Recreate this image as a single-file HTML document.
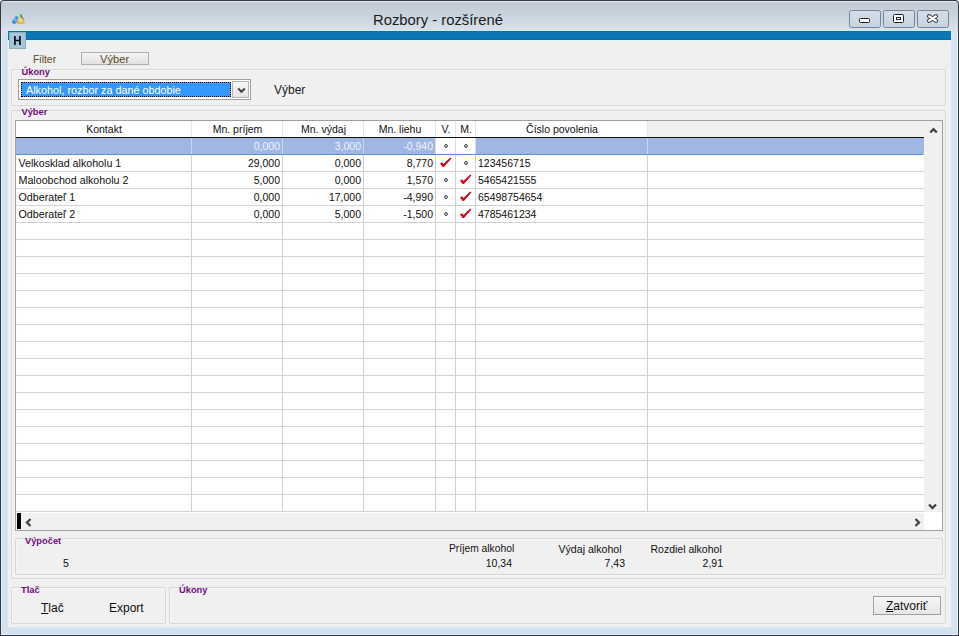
<!DOCTYPE html><html><head><meta charset="utf-8"><style>
*{margin:0;padding:0;box-sizing:border-box}
html,body{width:959px;height:636px;overflow:hidden;background:#fff}
body{position:relative;font-family:"Liberation Sans",sans-serif;color:#000}
.a{position:absolute}
.t{position:absolute;white-space:nowrap;line-height:1}
</style></head><body><div class="a" style="left:0;top:0;width:959px;height:636px;background:#343a42;border-radius:4px 4px 0 0"></div>
<div class="a" style="left:1px;top:1px;width:957px;height:634px;background:linear-gradient(#e4e9ee 0px,#e4e9ee 1px,#c3ccd6 1px,#c5d0da 10px,#ccd8e2 20px,#dae2ec 29px,#d2e2f1 40px,#d2e2f1 100%);border-radius:3px 3px 0 0"></div>
<div class="t" style="left:373px;top:13px;font-size:14.8px;color:#1b1b1b">Rozbory - rozšírené</div>
<svg class="a" style="left:10px;top:12px" width="17" height="14" viewBox="0 0 17 14">
<defs>
<radialGradient id="gb" cx="0.5" cy="0.45" r="0.6"><stop offset="0" stop-color="#7cc4f4"/><stop offset="1" stop-color="#2a6cc8"/></radialGradient>
<radialGradient id="gy" cx="0.5" cy="0.4" r="0.6"><stop offset="0" stop-color="#fbe8a0"/><stop offset="1" stop-color="#d8a838"/></radialGradient>
<radialGradient id="gg" cx="0.5" cy="0.5" r="0.6"><stop offset="0" stop-color="#c8f8d8"/><stop offset="1" stop-color="#78d098"/></radialGradient>
</defs>
<path d="M9.5 2.5 L11.5 2.2 L14 8 L12.5 9 Z" fill="#607868" opacity="0.9"/>
<path d="M6 2.8 Q8 1.6 10.5 2 L10 5.2 Q7.5 5.6 5.8 5 Z" fill="url(#gg)"/>
<path d="M5.5 4.2 Q7.5 4 8.2 5.5 L6.5 10.8 Q5 12.2 3 11.6 Q1.6 10.8 2.4 8.8 Z" fill="url(#gb)"/>
<path d="M8.5 6.2 Q10.5 5 12 6.2 L14.8 10 Q15.2 11.8 13 11.8 L8 11.8 Q6.2 11.6 7 10 Z" fill="url(#gy)"/>
</svg>
<div class="a" style="left:849px;top:10px;width:32px;height:18px;border:1px solid #7a8494;border-radius:2.5px;background:linear-gradient(#d4dde8,#cdd8e4 50%,#c6d3e0)"></div>
<div class="a" style="left:883px;top:10px;width:32px;height:18px;border:1px solid #7a8494;border-radius:2.5px;background:linear-gradient(#d4dde8,#cdd8e4 50%,#c6d3e0)"></div>
<div class="a" style="left:917px;top:10px;width:32px;height:18px;border:1px solid #7a8494;border-radius:2.5px;background:linear-gradient(#d4dde8,#cdd8e4 50%,#c6d3e0)"></div>
<div class="a" style="left:859px;top:18px;width:11px;height:5px;border:1.5px solid #222;border-radius:1.5px;background:#fff"></div>
<div class="a" style="left:893px;top:14px;width:11px;height:9px;border:1.5px solid #222;border-radius:1.5px;background:#fff"></div>
<div class="a" style="left:896px;top:17px;width:5px;height:3px;border:1px solid #222;background:#fff"></div>
<svg class="a" style="left:926px;top:13px" width="13" height="11" viewBox="0 0 13 11">
<path d="M3 3.3 L10 7.7 M10 3.3 L3 7.7" stroke="#3a3a3a" stroke-width="4.2" stroke-linecap="round"/>
<path d="M3 3.3 L10 7.7 M10 3.3 L3 7.7" stroke="#fff" stroke-width="2.2" stroke-linecap="round"/>
</svg>
<div class="a" style="left:1px;top:31px;width:1px;height:604px;background:#e6eef8"></div>
<div class="a" style="left:957px;top:31px;width:1px;height:604px;background:#e6eef8"></div>
<div class="a" style="left:1px;top:634px;width:957px;height:1px;background:#e6eef8"></div>
<div class="a" style="left:8px;top:31px;width:943px;height:596px;background:#f0f0f0;box-shadow:0 0 1.5px 0.5px #eaf0f4"></div>
<div class="a" style="left:8px;top:65px;width:943px;height:1px;background:#ebebeb"></div>
<div class="a" style="left:8px;top:31px;width:943px;height:9px;background:linear-gradient(#0a6aa4 0,#0a76b4 1px,#0a76b4 8px,#0a6ca6 8px)"></div>
<div class="a" style="left:8px;top:40px;width:943px;height:1px;background:#dcf4fc"></div>
<div class="a" style="left:8px;top:30px;width:943px;height:1px;background:#c6eefc"></div>
<div class="a" style="left:9px;top:32px;width:17px;height:17px;background:#a2c6da;border:1px solid #8eaebf"></div>
<svg class="a" style="left:13px;top:35px" width="9" height="11" viewBox="0 0 9 11"><path d="M1.9 1 V10 M6.9 1 V10 M1.9 5.5 H6.9" stroke="#0c0c10" stroke-width="1.7" fill="none"/></svg>
<div class="t" style="left:33px;top:55px;font-size:10.4px;color:#5e4828">Filter</div>
<div class="a" style="left:81px;top:52px;width:68px;height:13px;border:1px solid #b0b0b0;background:linear-gradient(#f4f4f4,#e2e2e2)"></div>
<div class="t" style="left:100px;top:54px;font-size:11.2px;color:#5e4828">Výber</div>
<div class="a" style="left:11px;top:69px;width:935px;height:37px;border:1px solid #d8d8d8;border-radius:2px;box-shadow:inset 1px 1px 0 #f5f5f5, 1px 1px 0 #f4f4f4"></div>
<div class="t" style="left:21.5px;top:68px;font-size:9.3px;font-weight:bold;color:#720e7c">Úkony</div>
<div class="a" style="left:18px;top:79px;width:233px;height:21px;border:1px solid #a0a0a0;background:#fff"></div>
<div class="a" style="left:21px;top:82px;width:210px;height:15px;background:#3399ff;outline:1px dotted #000;outline-offset:-1px"></div>
<div class="t" style="left:26px;top:85px;font-size:10.8px;color:#fff">Alkohol, rozbor za dané obdobie</div>
<div class="a" style="left:232px;top:81px;width:17px;height:17px;border:1px solid #b4b4b4;background:linear-gradient(#f6f6f6,#e4e4e4)"></div>
<svg class="a" style="left:236.5px;top:87px" width="9" height="7" viewBox="0 0 9 7"><path d="M1.2 1.5 L4.5 4.8 L7.8 1.5" stroke="#444" stroke-width="2" fill="none"/></svg>
<div class="t" style="left:274px;top:84px;font-size:12px;color:#222">Výber</div>
<div class="a" style="left:11px;top:110px;width:935px;height:469px;border:1px solid #d8d8d8;border-radius:2px;box-shadow:inset 1px 1px 0 #f5f5f5, 1px 1px 0 #f4f4f4"></div>
<div class="t" style="left:21.5px;top:108px;font-size:9.3px;font-weight:bold;color:#720e7c">Výber</div>
<div class="a" style="left:15px;top:120px;width:928px;height:411px;border:1px solid #a0a0a0;background:#fff"></div>
<div class="a" style="left:16px;top:121px;width:908px;height:16px;background:#f0f0f0"></div>
<div class="a" style="left:16px;top:121px;width:631px;height:16px;background:#fff"></div>
<div class="a" style="left:16px;top:137px;width:908px;height:1px;background:#111"></div>
<div class="a" style="left:16px;top:138px;width:908px;height:17px;background:#a1b7e3;border-bottom:1px solid #5d8fd4;border-radius:0 0 2px 0"></div>
<div class="a" style="left:436px;top:138px;width:39px;height:16px;background:#fff"></div>
<div class="a" style="left:16px;top:171px;width:908px;height:1px;background:#d3d3d3"></div>
<div class="a" style="left:16px;top:188px;width:908px;height:1px;background:#d3d3d3"></div>
<div class="a" style="left:16px;top:205px;width:908px;height:1px;background:#d3d3d3"></div>
<div class="a" style="left:16px;top:222px;width:908px;height:1px;background:#d3d3d3"></div>
<div class="a" style="left:16px;top:239px;width:908px;height:1px;background:#d3d3d3"></div>
<div class="a" style="left:16px;top:256px;width:908px;height:1px;background:#d3d3d3"></div>
<div class="a" style="left:16px;top:273px;width:908px;height:1px;background:#d3d3d3"></div>
<div class="a" style="left:16px;top:290px;width:908px;height:1px;background:#d3d3d3"></div>
<div class="a" style="left:16px;top:307px;width:908px;height:1px;background:#d3d3d3"></div>
<div class="a" style="left:16px;top:324px;width:908px;height:1px;background:#d3d3d3"></div>
<div class="a" style="left:16px;top:341px;width:908px;height:1px;background:#d3d3d3"></div>
<div class="a" style="left:16px;top:358px;width:908px;height:1px;background:#d3d3d3"></div>
<div class="a" style="left:16px;top:375px;width:908px;height:1px;background:#d3d3d3"></div>
<div class="a" style="left:16px;top:392px;width:908px;height:1px;background:#d3d3d3"></div>
<div class="a" style="left:16px;top:409px;width:908px;height:1px;background:#d3d3d3"></div>
<div class="a" style="left:16px;top:426px;width:908px;height:1px;background:#d3d3d3"></div>
<div class="a" style="left:16px;top:443px;width:908px;height:1px;background:#d3d3d3"></div>
<div class="a" style="left:16px;top:460px;width:908px;height:1px;background:#d3d3d3"></div>
<div class="a" style="left:16px;top:477px;width:908px;height:1px;background:#d3d3d3"></div>
<div class="a" style="left:16px;top:494px;width:908px;height:1px;background:#d3d3d3"></div>
<div class="a" style="left:16px;top:511px;width:908px;height:1px;background:#d3d3d3"></div>
<div class="a" style="left:191px;top:121px;width:1px;height:16px;background:#e8e8e8"></div>
<div class="a" style="left:191px;top:155px;width:1px;height:357px;background:#d3d3d3"></div>
<div class="a" style="left:191px;top:138px;width:1px;height:16px;background:#c6d6f0"></div>
<div class="a" style="left:282px;top:121px;width:1px;height:16px;background:#e8e8e8"></div>
<div class="a" style="left:282px;top:155px;width:1px;height:357px;background:#d3d3d3"></div>
<div class="a" style="left:282px;top:138px;width:1px;height:16px;background:#c6d6f0"></div>
<div class="a" style="left:363px;top:121px;width:1px;height:16px;background:#e8e8e8"></div>
<div class="a" style="left:363px;top:155px;width:1px;height:357px;background:#d3d3d3"></div>
<div class="a" style="left:363px;top:138px;width:1px;height:16px;background:#c6d6f0"></div>
<div class="a" style="left:435px;top:121px;width:1px;height:16px;background:#e8e8e8"></div>
<div class="a" style="left:435px;top:155px;width:1px;height:357px;background:#d3d3d3"></div>
<div class="a" style="left:435px;top:138px;width:1px;height:16px;background:#dcdcdc"></div>
<div class="a" style="left:455px;top:121px;width:1px;height:16px;background:#e8e8e8"></div>
<div class="a" style="left:455px;top:155px;width:1px;height:357px;background:#d3d3d3"></div>
<div class="a" style="left:455px;top:138px;width:1px;height:16px;background:#dcdcdc"></div>
<div class="a" style="left:475px;top:121px;width:1px;height:16px;background:#e8e8e8"></div>
<div class="a" style="left:475px;top:155px;width:1px;height:357px;background:#d3d3d3"></div>
<div class="a" style="left:475px;top:138px;width:1px;height:16px;background:#dcdcdc"></div>
<div class="a" style="left:647px;top:121px;width:1px;height:16px;background:#e8e8e8"></div>
<div class="a" style="left:647px;top:155px;width:1px;height:357px;background:#d3d3d3"></div>
<div class="a" style="left:647px;top:138px;width:1px;height:16px;background:#c6d6f0"></div>
<div class="t" style="left:16px;width:176px;top:124px;font-size:10.5px;text-align:center;color:#111">Kontakt</div>
<div class="t" style="left:192px;width:91px;top:124px;font-size:10.5px;text-align:center;color:#111">Mn. príjem</div>
<div class="t" style="left:283px;width:81px;top:124px;font-size:10.5px;text-align:center;color:#111">Mn. výdaj</div>
<div class="t" style="left:364px;width:72px;top:124px;font-size:10.5px;text-align:center;color:#111">Mn. liehu</div>
<div class="t" style="left:436px;width:20px;top:124px;font-size:10.5px;text-align:center;color:#111">V.</div>
<div class="t" style="left:456px;width:20px;top:124px;font-size:10.5px;text-align:center;color:#111">M.</div>
<div class="t" style="left:476px;width:172px;top:124px;font-size:10.5px;text-align:center;color:#111">Číslo povolenia</div>
<div class="t" style="left:191px;width:89px;top:141px;font-size:10.5px;text-align:right;color:#f0f4fc">0,000</div>
<div class="t" style="left:282px;width:79px;top:141px;font-size:10.5px;text-align:right;color:#f0f4fc">3,000</div>
<div class="t" style="left:363px;width:70px;top:141px;font-size:10.5px;text-align:right;color:#f0f4fc">-0,940</div>
<div class="a" style="left:444px;top:144px;width:4px;height:4px;border:1.3px solid #555;background:#bbb;border-radius:50%"></div>
<div class="a" style="left:464px;top:144px;width:4px;height:4px;border:1.3px solid #555;background:#bbb;border-radius:50%"></div>
<div class="t" style="left:18.5px;top:158px;font-size:10.7px;color:#111">Velkosklad alkoholu 1</div>
<div class="t" style="left:191px;width:89px;top:158px;font-size:10.5px;text-align:right;color:#111">29,000</div>
<div class="t" style="left:282px;width:79px;top:158px;font-size:10.5px;text-align:right;color:#111">0,000</div>
<div class="t" style="left:363px;width:70px;top:158px;font-size:10.5px;text-align:right;color:#111">8,770</div>
<svg class="a" style="left:440px;top:157px" width="13" height="12" viewBox="0 0 13 12"><path d="M0 6.6 L2 5.3 L3.4 7.1 L10.2 0.6 L11.4 1.6 L4 10.1 L2.6 9.9 Z" fill="#cc0a1e"/></svg>
<div class="a" style="left:464px;top:161px;width:4px;height:4px;border:1.3px solid #555;background:#bbb;border-radius:50%"></div>
<div class="t" style="left:478px;top:158px;font-size:10.5px;color:#111">123456715</div>
<div class="t" style="left:18.5px;top:175px;font-size:10.7px;color:#111">Maloobchod alkoholu 2</div>
<div class="t" style="left:191px;width:89px;top:175px;font-size:10.5px;text-align:right;color:#111">5,000</div>
<div class="t" style="left:282px;width:79px;top:175px;font-size:10.5px;text-align:right;color:#111">0,000</div>
<div class="t" style="left:363px;width:70px;top:175px;font-size:10.5px;text-align:right;color:#111">1,570</div>
<div class="a" style="left:444px;top:178px;width:4px;height:4px;border:1.3px solid #555;background:#bbb;border-radius:50%"></div>
<svg class="a" style="left:460px;top:174px" width="13" height="12" viewBox="0 0 13 12"><path d="M0 6.6 L2 5.3 L3.4 7.1 L10.2 0.6 L11.4 1.6 L4 10.1 L2.6 9.9 Z" fill="#cc0a1e"/></svg>
<div class="t" style="left:478px;top:175px;font-size:10.5px;color:#111">5465421555</div>
<div class="t" style="left:18.5px;top:192px;font-size:10.7px;color:#111">Odberateľ 1</div>
<div class="t" style="left:191px;width:89px;top:192px;font-size:10.5px;text-align:right;color:#111">0,000</div>
<div class="t" style="left:282px;width:79px;top:192px;font-size:10.5px;text-align:right;color:#111">17,000</div>
<div class="t" style="left:363px;width:70px;top:192px;font-size:10.5px;text-align:right;color:#111">-4,990</div>
<div class="a" style="left:444px;top:195px;width:4px;height:4px;border:1.3px solid #555;background:#bbb;border-radius:50%"></div>
<svg class="a" style="left:460px;top:191px" width="13" height="12" viewBox="0 0 13 12"><path d="M0 6.6 L2 5.3 L3.4 7.1 L10.2 0.6 L11.4 1.6 L4 10.1 L2.6 9.9 Z" fill="#cc0a1e"/></svg>
<div class="t" style="left:478px;top:192px;font-size:10.5px;color:#111">65498754654</div>
<div class="t" style="left:18.5px;top:209px;font-size:10.7px;color:#111">Odberateľ 2</div>
<div class="t" style="left:191px;width:89px;top:209px;font-size:10.5px;text-align:right;color:#111">0,000</div>
<div class="t" style="left:282px;width:79px;top:209px;font-size:10.5px;text-align:right;color:#111">5,000</div>
<div class="t" style="left:363px;width:70px;top:209px;font-size:10.5px;text-align:right;color:#111">-1,500</div>
<div class="a" style="left:444px;top:212px;width:4px;height:4px;border:1.3px solid #555;background:#bbb;border-radius:50%"></div>
<svg class="a" style="left:460px;top:208px" width="13" height="12" viewBox="0 0 13 12"><path d="M0 6.6 L2 5.3 L3.4 7.1 L10.2 0.6 L11.4 1.6 L4 10.1 L2.6 9.9 Z" fill="#cc0a1e"/></svg>
<div class="t" style="left:478px;top:209px;font-size:10.5px;color:#111">4785461234</div>
<div class="a" style="left:924px;top:121px;width:18px;height:391px;background:#f0f0f0"></div>
<svg class="a" style="left:928.5px;top:127px" width="9" height="7" viewBox="0 0 9 7"><path d="M1.2 5.5 L4.5 2.2 L7.8 5.5" stroke="#444" stroke-width="2.3" fill="none"/></svg>
<svg class="a" style="left:928px;top:502.5px" width="9" height="7" viewBox="0 0 9 7"><path d="M1 1.5 L4.5 5 L8 1.5" stroke="#444" stroke-width="2.4" fill="none"/></svg>
<div class="a" style="left:16px;top:512px;width:908px;height:1px;background:#fff"></div>
<div class="a" style="left:16px;top:513px;width:908px;height:17px;background:#f0f0f0"></div>
<div class="a" style="left:17px;top:513px;width:4px;height:16px;background:#000"></div>
<svg class="a" style="left:25px;top:517.5px" width="7" height="9" viewBox="0 0 7 9"><path d="M5.5 1 L2 4.5 L5.5 8" stroke="#444" stroke-width="2.3" fill="none"/></svg>
<svg class="a" style="left:913.5px;top:517.5px" width="7" height="9" viewBox="0 0 7 9"><path d="M1.5 1 L5 4.5 L1.5 8" stroke="#444" stroke-width="2.3" fill="none"/></svg>
<div class="a" style="left:924px;top:513px;width:18px;height:17px;background:#fff"></div>
<div class="a" style="left:15px;top:538px;width:928px;height:37px;border:1px solid #d8d8d8;border-radius:2px;box-shadow:inset 1px 1px 0 #f5f5f5, 1px 1px 0 #f4f4f4"></div>
<div class="t" style="left:25px;top:537px;font-size:9.3px;font-weight:bold;color:#720e7c">Výpočet</div>
<div class="t" style="left:63px;top:558px;font-size:10.5px;color:#111">5</div>
<div class="t" style="left:449px;top:544px;font-size:10.3px;color:#111">Príjem alkohol</div>
<div class="t" style="left:558.5px;top:544px;font-size:10.6px;color:#111">Výdaj alkohol</div>
<div class="t" style="left:650.5px;top:544px;font-size:10.5px;color:#111">Rozdiel alkohol</div>
<div class="t" style="left:452px;width:60px;text-align:right;top:558px;font-size:10.5px;color:#111">10,34</div>
<div class="t" style="left:565px;width:60px;text-align:right;top:558px;font-size:10.5px;color:#111">7,43</div>
<div class="t" style="left:663px;width:60px;text-align:right;top:558px;font-size:10.5px;color:#111">2,91</div>
<div class="a" style="left:11px;top:587px;width:155px;height:37px;border:1px solid #d8d8d8;border-radius:2px;box-shadow:inset 1px 1px 0 #f5f5f5, 1px 1px 0 #f4f4f4"></div>
<div class="t" style="left:21px;top:586px;font-size:9.3px;font-weight:bold;color:#720e7c">Tlač</div>
<div class="t" style="left:41px;top:602px;font-size:12px;color:#111"><span style="text-decoration:underline">T</span>lač</div>
<div class="t" style="left:109px;top:602px;font-size:12px;color:#111">Export</div>
<div class="a" style="left:169px;top:587px;width:777px;height:37px;border:1px solid #d8d8d8;border-radius:2px;box-shadow:inset 1px 1px 0 #f5f5f5, 1px 1px 0 #f4f4f4"></div>
<div class="t" style="left:179px;top:586px;font-size:9.3px;font-weight:bold;color:#720e7c">Úkony</div>
<div class="a" style="left:873px;top:596px;width:68px;height:19px;border:1px solid #a0a0a0;background:linear-gradient(#f6f6f6,#e6e6e6)"></div>
<div class="t" style="left:886px;top:600px;font-size:12px;color:#111"><span style="text-decoration:underline">Z</span>atvoriť</div></body></html>
